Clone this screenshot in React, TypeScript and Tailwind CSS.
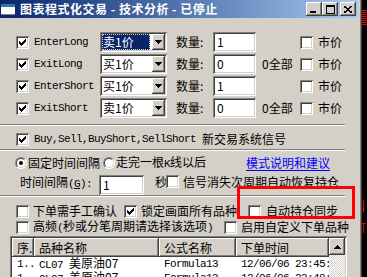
import React from 'react';

const SUNKEN =
  'shadow-[inset_1px_1px_0_#808080,inset_-1px_-1px_0_#ffffff,inset_2px_2px_0_#404040,inset_-2px_-2px_0_#d4d0c8]';
const RAISED =
  'shadow-[inset_-1px_-1px_0_#404040,inset_1px_1px_0_#ffffff,inset_-2px_-2px_0_#808080,inset_2px_2px_0_#d4d0c8]';
const MONO = "font-['Liberation_Mono',monospace] text-[11px] tracking-[-0.6px]";

// classic 7x7 check mark, one rect per run of pixels
const CHECK_RUNS: [number, number, number][] = [
  [6, 0, 1],
  [5, 1, 2],
  [0, 2, 1],
  [4, 2, 3],
  [0, 3, 2],
  [3, 3, 3],
  [0, 4, 5],
  [1, 5, 3],
  [2, 6, 1],
];

function Check({ on }: { on?: boolean }) {
  return (
    <span className={`relative block w-[13px] h-[13px] shrink-0 bg-white ${SUNKEN}`}>
      {on && (
        <svg className="absolute left-[3px] top-[3px]" width="7" height="7" viewBox="0 0 7 7" shapeRendering="crispEdges">
          {CHECK_RUNS.map(([x, y, w], i) => (
            <rect key={i} x={x} y={y} width={w} height={1} fill="#000" />
          ))}
        </svg>
      )}
    </span>
  );
}

function Radio({ on }: { on?: boolean }) {
  return (
    <span className="relative block w-[12px] h-[12px] shrink-0 rounded-full bg-white border border-t-[#808080] border-l-[#808080] border-r-white border-b-white">
      <span className="absolute inset-0 rounded-full border border-t-[#404040] border-l-[#404040] border-r-[#d4d0c8] border-b-[#d4d0c8]" />
      {on && <span className="absolute left-[3px] top-[3px] w-[4px] h-[4px] rounded-full bg-black" />}
    </span>
  );
}

function Combo({ value, sel }: { value: string; sel?: boolean }) {
  return (
    <div className={`flex w-[67px] h-[20px] p-[2px] bg-white shrink-0 ${SUNKEN}`}>
      <div className="flex-1 pr-[2px]">
        <div
          className={`h-full flex items-center pl-[1px] leading-[14px] ${
            sel ? 'bg-[#0a246a] text-white outline-1 outline-dotted outline-[#d4d0c8] -outline-offset-1' : ''
          }`}
        >
          {value}
        </div>
      </div>
      <div className={`w-[13px] h-[16px] bg-[#d4d0c8] flex items-center justify-center ${RAISED}`}>
        <svg width="7" height="4" viewBox="0 0 7 4" shapeRendering="crispEdges">
          <path d="M0 0h7v1h-1v1h-1v1h-1v1h-1v-1h-1v-1h-1v-1h-1z" fill="#000" />
        </svg>
      </div>
    </div>
  );
}

function Field({ value, w }: { value: string; w: string }) {
  return (
    <div className={`${w} h-[20px] shrink-0 bg-white flex items-center pl-[4px] leading-[14px] ${SUNKEN}`}>{value}</div>
  );
}

function Sep() {
  return <div className="w-[345px] h-[2px] shrink-0 border-t border-t-[#808080] border-b border-b-white" />;
}

function OrderRow({ name, price, sel, qty, all }: { name: string; price: string; sel?: boolean; qty: string; all?: boolean }) {
  return (
    <div className="flex items-center h-[22px] pl-[16px]">
      <Check on />
      <span className={`ml-[5px] w-[66px] shrink-0 ${MONO}`}>{name}</span>
      <Combo value={price} sel={sel} />
      <span className="ml-[9px] w-[37px] shrink-0">数量:</span>
      <Field value={qty} w="w-[43px]" />
      <span className="ml-[6px] w-[38px] shrink-0">{all ? '0全部' : ''}</span>
      <Check />
      <span className="ml-[5px]">市价</span>
    </div>
  );
}

function TitleButton({ kind, className }: { kind: 'min' | 'max' | 'close'; className?: string }) {
  return (
    <div className={`w-[16px] h-[14px] bg-[#d4d0c8] flex items-center justify-center ${RAISED} ${className ?? ''}`}>
      {kind === 'min' && (
        <svg width="8" height="7" viewBox="0 0 8 7" shapeRendering="crispEdges">
          <rect x="0" y="5" width="6" height="2" fill="#000" />
        </svg>
      )}
      {kind === 'max' && (
        <svg width="9" height="9" viewBox="0 0 9 9" shapeRendering="crispEdges">
          <path d="M0 0h9v9H0z M1 2v6h7V2z" fill="#000" fillRule="evenodd" />
        </svg>
      )}
      {kind === 'close' && (
        <svg width="8" height="7" viewBox="0 0 8 7" shapeRendering="crispEdges">
          <path d="M0 0L8 7M8 0L0 7" stroke="#000" strokeWidth="1.6" />
        </svg>
      )}
    </div>
  );
}

const COLS = ['w-[22px]', 'w-[125px]', 'w-[77px]', 'w-[93px]'];
const HEAD = ['序.', '品种名称', '公式名称', '下单时间'];
const ROWS = [
  ['1..', 'CL07 美原油07', 'Formula13', '12/06/06 23:45:'],
  ['1..', 'CL07 美原油07', 'Formula13', '12/06/06 23:48:'],
];

export default function App() {
  return (
    <div className="w-[367px] h-[277px] overflow-hidden flex bg-black font-['Noto_Sans_CJK_SC',sans-serif] text-[12px] leading-[14px] text-black">
      <div className="relative w-[362px] h-full shrink-0 bg-[#d4d0c8] flex flex-col shadow-[inset_-1px_0_0_#404040,inset_-2px_0_0_#808080]">
        {/* title bar */}
        <div className="w-[358px] h-[18px] shrink-0 flex items-center bg-linear-to-r from-[#0a246a] to-[#a6caf0]">
          <div className="ml-[1px] w-[14px] h-[11px] bg-white border-t-[3px] border-t-[#3a6ea5] shadow-[inset_0_-1px_0_#808080]" />
          <span className="ml-[5px] text-white font-bold tracking-[0.5px] whitespace-nowrap">图表程式化交易 - 技术分析 - 已停止</span>
          <div className="ml-auto flex items-center pr-[2px]">
            <TitleButton kind="min" />
            <TitleButton kind="max" />
            <TitleButton kind="close" className="ml-[2px]" />
          </div>
        </div>

        <div className="pt-[13px] shrink-0">
          <OrderRow name="EnterLong" price="卖1价" sel qty="1" />
          <OrderRow name="ExitLong" price="买1价" qty="0" all />
          <OrderRow name="EnterShort" price="买1价" qty="1" />
          <OrderRow name="ExitShort" price="卖1价" qty="0" all />
        </div>

        <div className="mt-[5px] shrink-0">
          <Sep />
        </div>

        <div className="flex items-center h-[23px] shrink-0 pt-[3px] pl-[16px] whitespace-nowrap">
          <Check on />
          <span className={`ml-[5px] ${MONO}`}>Buy,Sell,BuyShort,SellShort</span>
          <span className="ml-[6px]">新交易系统信号</span>
        </div>

        <Sep />

        <div className="flex items-center h-[24px] shrink-0 pl-[15px] whitespace-nowrap">
          <div className="flex items-center w-[88px] shrink-0">
            <Radio on />
            <span className="ml-[1px]">固定时间间隔</span>
          </div>
          <div className="flex items-center w-[143px] shrink-0">
            <Radio />
            <span className="ml-[1px]">
              走完一根<span className={MONO}>K</span>线以后
            </span>
          </div>
          <span className="text-[#0000ff] underline underline-offset-2">模式说明和建议</span>
        </div>

        <div className="flex items-start h-[20px] shrink-0 pl-[20px] whitespace-nowrap">
          <div className="w-[79px] shrink-0">
            时间间隔
            <span className={MONO}>
              (<span className="underline">G</span>):
            </span>
          </div>
          <Field value="1" w="w-[45px]" />
          <div className="w-[22px] shrink-0 pl-[11px]">秒</div>
          <Check />
          <div className="ml-[4px] shrink-0">信号消失次周期自动恢复持仓</div>
        </div>

        <Sep />

        <div className="pt-[6px] shrink-0 whitespace-nowrap">
          <div className="flex items-center h-[16px] pl-[16px]">
            <div className="flex items-center w-[108px] shrink-0">
              <Check />
              <span className="ml-[4px]">下单需手工确认</span>
            </div>
            <div className="flex items-center w-[124px] shrink-0">
              <Check on />
              <span className="ml-[4px]">锁定画面所有品种</span>
            </div>
            <Check />
            <span className="ml-[5px]">自动持仓同步</span>
          </div>
          <div className="flex items-center h-[16px] pl-[16px]">
            <div className="flex items-center w-[208px] shrink-0">
              <Check />
              <span className="ml-[4px]">
                高频<span className={MONO}>(</span>秒或分笔周期请选择该选项<span className={MONO}>)</span>
              </span>
            </div>
            <Check />
            <span className="ml-[4px]">启用自定义下单品种</span>
          </div>
        </div>

        {/* list view */}
        <div className={`mt-[1px] ml-[10px] w-[337px] flex-1 p-[2px] bg-white flex ${SUNKEN}`}>
          <div className="w-[317px] flex flex-col">
            <div className="flex h-[19px] shrink-0">
              {HEAD.map((h, i) => (
                <div
                  key={i}
                  className={`${COLS[i]} h-full bg-[#d4d0c8] flex items-center pl-[5px] overflow-hidden whitespace-nowrap shadow-[inset_-1px_-1px_0_#404040,inset_1px_1px_0_#ffffff,inset_-2px_-2px_0_#808080]`}
                >
                  {h}
                </div>
              ))}
            </div>
            {ROWS.map((r, ri) => (
              <div key={ri} className="flex h-[14px] shrink-0">
                {r.map((c, i) => (
                  <div key={i} className={`${COLS[i]} flex items-center pl-[5px] overflow-hidden whitespace-nowrap`}>
                    {i === 1 ? (
                      <span>
                        <span className={MONO}>CL07 </span>美原油07
                      </span>
                    ) : (
                      <span className={MONO}>{c}</span>
                    )}
                  </div>
                ))}
              </div>
            ))}
          </div>
          <div className="w-[16px] flex flex-col">
            <div className={`h-[17px] shrink-0 bg-[#d4d0c8] flex items-center justify-center ${RAISED}`}>
              <svg width="7" height="4" viewBox="0 0 7 4" shapeRendering="crispEdges">
                <path d="M3 0h1v1h1v1h1v1h1v1H0V3h1V2h1V1h1z" fill="#000" />
              </svg>
            </div>
            <div className="flex-1 bg-[repeating-conic-gradient(#ffffff_0%_25%,#d4d0c8_0%_50%)] bg-[length:2px_2px]" />
          </div>
        </div>

        {/* red annotation box */}
        <div className="absolute left-[237px] top-[186px] w-[118px] h-[33px] border-[3px] border-[#ff0000]" />
      </div>

      {/* chart window peeking on the right */}
      <div className="relative flex-1">
        <div className="absolute left-0 top-[10px] w-full h-[15px] bg-[repeating-linear-gradient(#e00000_0px_1px,#000000_1px_2px)]" />
        <div className="absolute left-[1px] top-[200px] w-[1px] h-[12px] bg-[#e00000]" />
        <div className="absolute left-0 top-[223px] w-[4px] h-[1px] bg-[#e00000]" />
        <div className="absolute left-[1px] top-[223px] w-[1px] h-[10px] bg-[#e00000]" />
      </div>
    </div>
  );
}
